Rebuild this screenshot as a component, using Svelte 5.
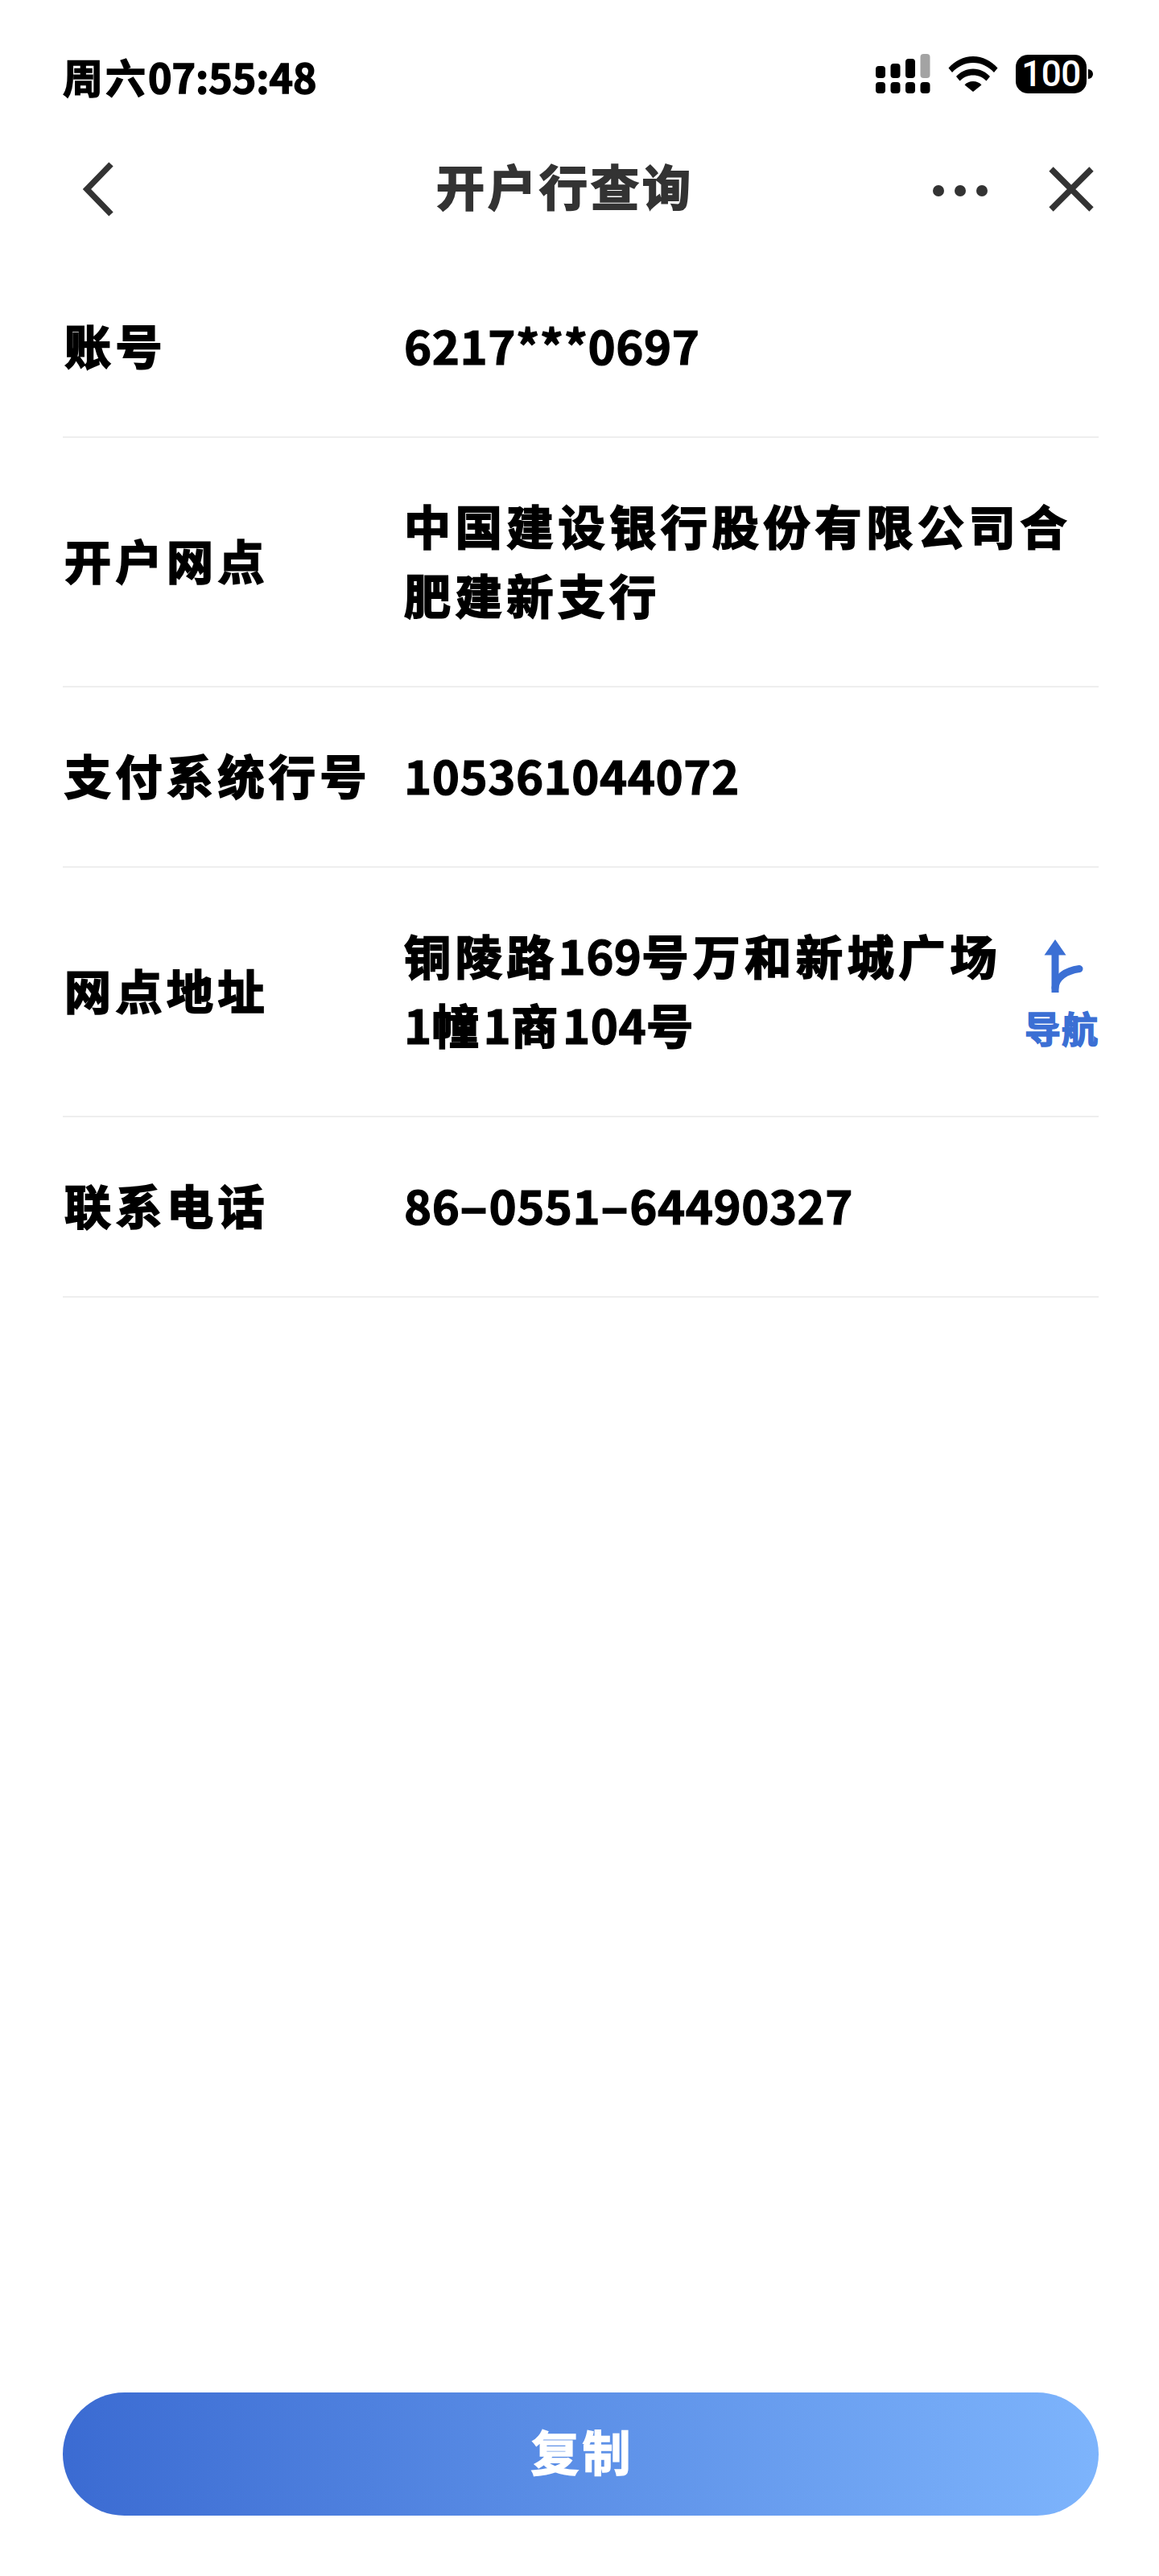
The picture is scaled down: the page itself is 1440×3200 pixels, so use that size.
<script lang="ts">
	interface Row {
		label: string;
		value: string;
		nav?: boolean;
	}

	const rows: Row[] = [
		{ label: '账号', value: '6217***0697' },
		{ label: '开户网点', value: '中国建设银行股份有限公司合肥建新支行' },
		{ label: '支付系统行号', value: '105361044072' },
		{ label: '网点地址', value: '铜陵路169号万和新城广场1幢1商104号', nav: true },
		{ label: '联系电话', value: '86-0551-64490327' }
	];

	// CJK runs get wider tracking than the digits, hyphens are drawn long
	function runs(text: string) {
		return text.match(/[\u4e00-\u9fff]+|-|[^\u4e00-\u9fff-]+/g) ?? [];
	}
</script>

<div class="page">
	<div class="status">
		<span class="time"><span class="cn">周六</span>07:55:48</span>
		<div class="status-icons">
			<svg class="signal" width="68" height="50" viewBox="0 0 68 50" aria-hidden="true">
				<rect x="0" y="15" width="12" height="15" rx="4" />
				<rect x="18.5" y="12" width="12" height="18" rx="4" />
				<rect x="37" y="6" width="12" height="24" rx="4" />
				<rect x="55.5" y="0" width="12" height="30" rx="4" fill="#a3a3a3" />
				<rect x="0" y="35" width="12" height="14" rx="4" />
				<rect x="18.5" y="35" width="12" height="14" rx="4" />
				<rect x="37" y="35" width="12" height="14" rx="4" />
				<rect x="55.5" y="35" width="12" height="14" rx="4" />
			</svg>
			<svg class="wifi" width="62" height="46" viewBox="0 0 62 46" aria-hidden="true">
				<path d="M0.5 15.5C8.5 6.5 19 1 31 1s22.500 5.500 30.500 14.500l-4.500 5.500C50 13.500 41 9 31 9S12 13.500 5 21z" />
				<path d="M10 26C15 20.500 22.500 16.500 31 16.500S47 20.500 52 26l-4.500 5.500C43 27 37.500 24.500 31 24.500S19 27 14.500 31.500z" />
				<path d="M20.500 36.500C23 33.500 26.800 32 31 32s8 1.500 10.500 4.500L31 45z" />
			</svg>
			<div class="battery">
				<span class="level">100</span>
				<span class="nub"></span>
			</div>
		</div>
	</div>

	<div class="nav">
		<svg class="back" width="44" height="70" viewBox="0 0 44 70" fill="none" aria-hidden="true">
			<path d="M38 4 8 35l30 31" stroke="#333" stroke-width="7.500" />
		</svg>
		<div class="title">开户行查询</div>
		<div class="actions">
			<svg width="70" height="16" viewBox="0 0 70 16" aria-hidden="true">
				<circle cx="8" cy="8" r="7" fill="#333" />
				<circle cx="35" cy="8" r="7" fill="#333" />
				<circle cx="62" cy="8" r="7" fill="#333" />
			</svg>
			<svg width="56" height="56" viewBox="0 0 56 56" fill="none" aria-hidden="true">
				<path d="M3 3l50 50M53 3 3 53" stroke="#333" stroke-width="7.500" />
			</svg>
		</div>
	</div>

	<div class="list">
		{#each rows as row}
			<div class="row">
				<div class="label">{row.label}</div>
				<div class="value" class:short={row.nav}>
					{#each runs(row.value) as run}
						<span class:cn={/[\u4e00-\u9fff]/.test(run)} class:dash={run === '-'}>{run}</span>
					{/each}
				</div>
				{#if row.nav}
					<div class="go">
						<svg width="50" height="68" viewBox="0 0 50 68" aria-hidden="true">
							<path d="M14 0 27.500 19.500H18.500V66H9.500V19.500H0.500z" fill="#3b6fd4" />
							<path d="M14 60C15 47 27 39 44 36.500" fill="none" stroke="#3b6fd4" stroke-width="9" stroke-linecap="round" />
						</svg>
						<span>导航</span>
					</div>
				{/if}
			</div>
		{/each}
	</div>

	<button class="copy" type="button">复制</button>
</div>

<style>
	:global(body) {
		margin: 0;
		background: #fff;
	}

	.page {
		display: flex;
		flex-direction: column;
		min-height: 3200px;
		box-sizing: border-box;
		font-family: 'Noto Sans CJK SC', 'Noto Sans', sans-serif;
		color: #000;
	}

	.status {
		display: flex;
		align-items: center;
		justify-content: space-between;
		height: 60px;
		padding: 62px 82px 28px 78px;
	}

	.time {
		padding-top: 3px;
		font-size: 50px;
		font-weight: 700;
		line-height: 60px;
		-webkit-text-stroke: 1.5px #000;
	}

	.time .cn {
		letter-spacing: 3px;
	}

	.status-icons {
		display: flex;
		align-items: center;
		gap: 22px;
	}

	.status-icons svg {
		display: block;
	}

	.battery {
		display: flex;
		align-items: center;
		gap: 2px;
	}

	.level {
		width: 88px;
		height: 48px;
		border-radius: 15px;
		background: #000;
		color: #fff;
		font-family: Roboto, sans-serif;
		font-size: 44px;
		font-weight: 500;
		line-height: 48px;
		letter-spacing: -0.5px;
		text-align: center;
	}

	.nub {
		width: 6px;
		height: 12px;
		border-radius: 0 6px 6px 0;
		background: #000;
	}

	.nav {
		display: flex;
		align-items: center;
		justify-content: space-between;
		height: 170px;
		padding: 0 78px 0 100px;
	}

	.title {
		margin: 0 0 12px 102px;
		color: #333;
		font-size: 60px;
		font-weight: 700;
		letter-spacing: 4px;
		-webkit-text-stroke: 2px #333;
	}

	.actions {
		display: flex;
		align-items: center;
		gap: 75px;
		padding-right: 3px;
	}

	.actions svg:first-child {
		margin-top: 4px;
	}

	.list {
		padding: 0 75px 0 78px;
	}

	.row {
		display: flex;
		align-items: center;
		padding: 65px 0 71px;
		border-bottom: 2px solid #eee;
	}

	.label {
		flex: 0 0 424px;
		padding-left: 2px;
		box-sizing: border-box;
		font-size: 58px;
		font-weight: 700;
		line-height: 86px;
		letter-spacing: 5.500px;
		-webkit-text-stroke: 2px #000;
	}

	.value {
		flex: 1;
		font-size: 58px;
		font-weight: 700;
		line-height: 86px;
		letter-spacing: 0.500px;
		-webkit-text-stroke: 1.2px #000;
	}

	.value .cn {
		letter-spacing: 5.800px;
		-webkit-text-stroke: 2px #000;
	}

	.value .dash {
		display: inline-block;
		margin: 0 7px;
		transform: scaleX(1.75);
	}

	.value.short {
		flex: 0 0 760px;
	}

	.go {
		display: flex;
		flex-direction: column;
		align-items: center;
		gap: 16px;
		margin: 0 0 -12px auto;
		color: #3b6fd4;
		font-size: 45px;
		font-weight: 700;
		line-height: 52px;
		letter-spacing: 1px;
		-webkit-text-stroke: 1.500px #3b6fd4;
	}

	.go svg {
		display: block;
		margin-left: 7px;
	}

	.copy {
		align-self: flex-start;
		width: 1287px;
		height: 153px;
		margin: auto 0 75px 78px;
		padding: 0 0 10px 4px;
		border: none;
		border-radius: 77px;
		background: linear-gradient(90deg, #3b6bd2, #7db4fc);
		color: #fff;
		font-family: inherit;
		font-size: 60px;
		font-weight: 700;
		letter-spacing: 4px;
		-webkit-text-stroke: 1.500px #fff;
	}
</style>
